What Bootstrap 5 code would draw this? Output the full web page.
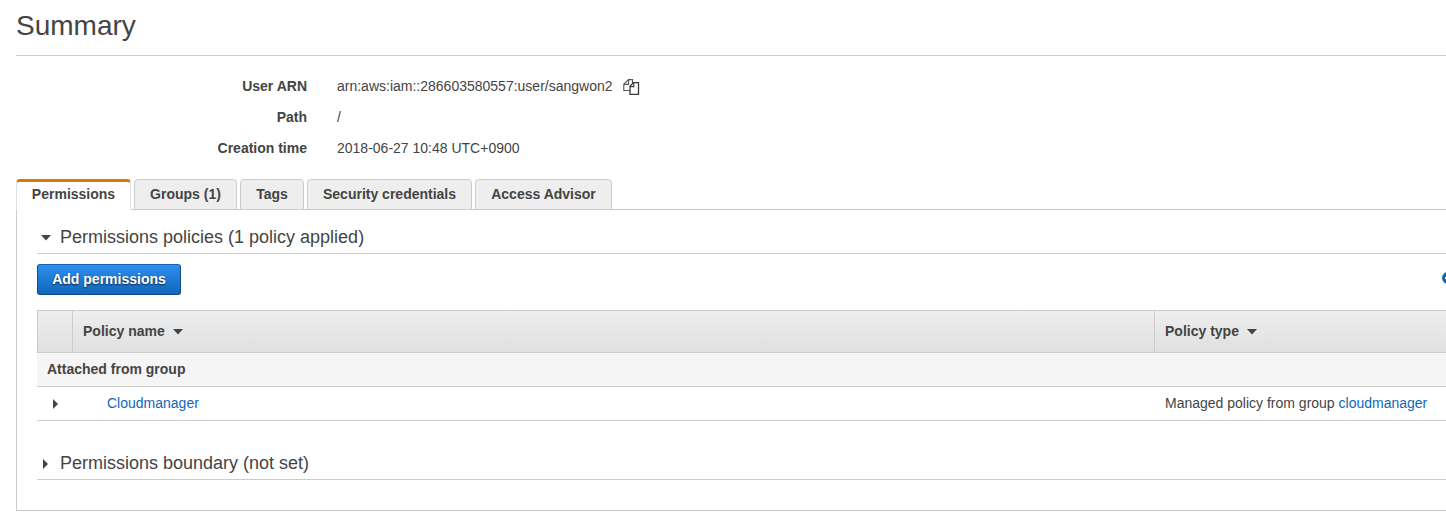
<!DOCTYPE html>
<html lang="en">
<head>
<meta charset="utf-8">
<meta name="viewport" content="width=device-width, initial-scale=1">
<title>Summary</title>
<link rel="stylesheet" href="https://cdn.jsdelivr.net/npm/bootstrap@5.3.0/dist/css/bootstrap.min.css">
<style>
body { font-family: "Liberation Sans", Arial, sans-serif; font-size: 14px; line-height: 20px; color: #444; height: 512px; overflow: hidden; }
a { color: #1166bb; text-decoration: none; }
svg { display: block; flex: none; }
.page-title { font-size: 28px; line-height: 34px; font-weight: 400; height: 56px; padding-top: 9px; border-bottom: 1px solid #ccc; }
.details { padding-top: 14px; height: 123px; }
.details .line { height: 31px; align-items: center; }
.details dt { width: 291px; text-align: right; font-weight: 700; }
.details dd { margin: 0 0 0 30px; }
.copy { margin: 3px 0 0 10px; }
.nav-tabs { --bs-nav-tabs-border-color: #ccc; gap: 3px; height: 31px; }
.nav-tabs .nav-link { height: 31px; padding: 0; line-height: 29px; text-align: center; font-weight: 700; color: #444; background: #eee; border: 1px solid #ccc; border-radius: 4px 4px 0 0; }
.nav-tabs .nav-link:hover { color: #444; border-color: #ccc; }
.nav-tabs .nav-link.active { color: #444; background: #fff; border-top: 3px solid #e07700; border-bottom-color: #fff; line-height: 25px; }
.w-perm { width: 115px; } .w-groups { width: 103px; } .w-tags { width: 64px; } .w-cred { width: 165px; } .w-adv { width: 137px; }
.panel { height: 301px; border-left: 1px solid #ccc; border-bottom: 1px solid #ccc; padding-left: 20px; }
.section-title { font-size: 18px; line-height: 24px; font-weight: 400; margin: 0; border-bottom: 1px solid #ccc; gap: 9px; padding-left: 4px; }
.first { height: 44px; padding-top: 10px; }
.first svg { margin-top: 3px; }
.toolbar { height: 56px; padding-top: 10px; }
.btn-add { width: 144px; height: 31px; padding: 0 0 1px; line-height: 28px; font-size: 14px; font-weight: 700; color: #fff; border: 1px solid #124b83; border-top-color: #1a62b4; border-radius: 3px; background: linear-gradient(#2e8eee, #1166bb); text-shadow: 0 1px 2px rgba(0,0,0,.7); }
.btn-add span { display: block; margin-top: -1px; }
.btn-add:hover { color: #fff; }
.table { --bs-table-bg: transparent; --bs-table-color: #444; table-layout: fixed; margin: 0; border-collapse: separate; border-spacing: 0; color: #444; }
.table > :not(caption) > * > * { padding: 0 0 2px 10px; border: 0 solid #ccc; border-bottom-width: 1px; vertical-align: middle; color: #444; }
.table > thead > tr > th { height: 43px; border-top-width: 1px; border-left-width: 1px; }
.table > thead svg { margin-top: 2px; }
.table > thead { background: linear-gradient(#efefef, #dfdfdf); }
.table > tbody > tr > td { height: 34px; }
.table > tbody > .policy-row > td { padding-left: 11px; }
.table > tbody > .policy-row svg { margin: 2px 0 0 4px; }
.table > tbody > .group-row > td { background: #f5f5f5; font-weight: 700; }
.second { height: 29px; margin-top: 30px; gap: 8px; }
.second svg { margin: 8px 4px 0 1px; }
</style>
</head>
<body>
<main class="ps-3">
  <h1 class="page-title mb-0">Summary</h1>
  <dl class="details mb-0">
    <div class="line d-flex"><dt>User ARN</dt><dd class="d-flex align-items-center">arn:aws:iam::286603580557:user/sangwon2
      <svg class="copy" width="17" height="17" viewBox="0 0 17 17" fill="#fff" stroke="#555" stroke-width="1.1"><path d="M5.5.6H9.5V11.5H.8V5.3z"/><path d="M5.6.6v4.8H.8" fill="none"/><path d="M10.5 3.6h5V15.3H7V7.3z" stroke="#3a3a3a" stroke-width="1.3"/><path d="M10.8 3.6v4H7" fill="none" stroke="#3a3a3a"/></svg></dd></div>
    <div class="line d-flex"><dt>Path</dt><dd>/</dd></div>
    <div class="line d-flex"><dt>Creation time</dt><dd>2018-06-27 10:48 UTC+0900</dd></div>
  </dl>
  <ul class="nav nav-tabs flex-nowrap">
    <li class="nav-item"><a class="nav-link active w-perm" href="#">Permissions</a></li>
    <li class="nav-item"><a class="nav-link w-groups" href="#">Groups (1)</a></li>
    <li class="nav-item"><a class="nav-link w-tags" href="#">Tags</a></li>
    <li class="nav-item"><a class="nav-link w-cred" href="#">Security credentials</a></li>
    <li class="nav-item"><a class="nav-link w-adv" href="#">Access Advisor</a></li>
  </ul>
  <section class="panel">
    <h2 class="section-title first d-flex align-items-center">
      <svg width="10" height="6" viewBox="0 0 10 6" fill="#444"><path d="M0 0h10L5 5.5z"/></svg>Permissions policies (1 policy applied)</h2>
    <div class="toolbar d-flex justify-content-between overflow-hidden">
      <button class="btn btn-add" type="button"><span>Add permissions</span></button>
      <svg class="mt-2" style="margin-right:-8px" width="12" height="12" viewBox="0 0 12 12"><circle cx="6" cy="6" r="6" fill="#16b"/><path d="M3 6h6M6 3v6" stroke="#fff" stroke-width="2"/></svg>
    </div>
    <table class="table">
      <colgroup><col style="width:35px"><col style="width:1082px"><col></colgroup>
      <thead><tr>
        <th></th>
        <th><div class="d-flex align-items-center gap-2">Policy name <svg width="10" height="6" viewBox="0 0 10 6" fill="#444"><path d="M0 0h10L5 5.5z"/></svg></div></th>
        <th><div class="d-flex align-items-center gap-2">Policy type <svg width="10" height="6" viewBox="0 0 10 6" fill="#444"><path d="M0 0h10L5 5.5z"/></svg></div></th>
      </tr></thead>
      <tbody>
        <tr class="group-row"><td colspan="3">Attached from group</td></tr>
        <tr class="policy-row">
          <td><svg width="6" height="10" viewBox="0 0 6 10" fill="#444"><path d="M1 0v10l5-5z"/></svg></td>
          <td><div class="ps-4"><a href="#">Cloudmanager</a></div></td>
          <td class="text-nowrap">Managed policy from group <a href="#">cloudmanager</a></td>
        </tr>
      </tbody>
    </table>
    <h2 class="section-title second d-flex align-items-start">
      <svg width="6" height="10" viewBox="0 0 6 10" fill="#444"><path d="M1 0v10l5-5z"/></svg>Permissions boundary (not set)</h2>
  </section>
</main>
<script src="https://cdn.jsdelivr.net/npm/bootstrap@5.3.0/dist/js/bootstrap.bundle.min.js"></script>
</body>
</html>
